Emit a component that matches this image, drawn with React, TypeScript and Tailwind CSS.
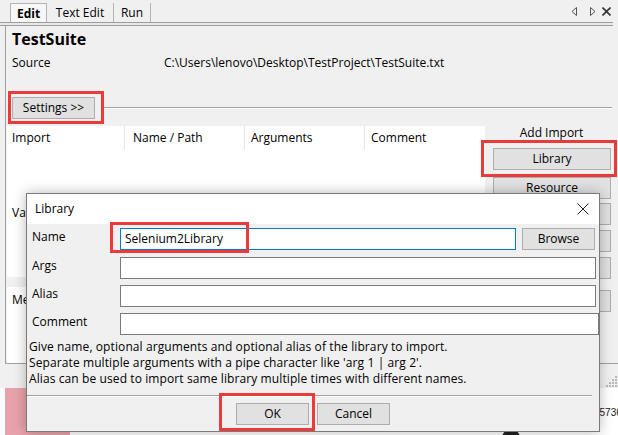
import React from 'react'

// Windows-style button used across the settings panel and the dialog
function WinButton({ label, className = '' }: { label: string; className?: string }) {
  return (
    <div
      className={`h-[22px] border border-[#adadad] bg-[#e1e1e1] text-center leading-[20px] text-black ${className}`}
    >
      {label}
    </div>
  )
}

function TriLeft() {
  return (
    <svg width="7" height="9" viewBox="0 0 7 9">
      <polygon points="5.5,0.5 1,4.5 5.5,8.5" fill="none" stroke="#555" strokeWidth="1" />
    </svg>
  )
}

function TriRight() {
  return (
    <svg width="7" height="9" viewBox="0 0 7 9">
      <polygon points="1.5,0.5 6,4.5 1.5,8.5" fill="none" stroke="#555" strokeWidth="1" />
    </svg>
  )
}

function CloseX({ size = 9, stroke = 1.6, color = '#333' }: { size?: number; stroke?: number; color?: string }) {
  return (
    <svg width={size} height={size} viewBox={`0 0 ${size} ${size}`}>
      <line x1="0.5" y1="0.5" x2={size - 0.5} y2={size - 0.5} stroke={color} strokeWidth={stroke} />
      <line x1={size - 0.5} y1="0.5" x2="0.5" y2={size - 0.5} stroke={color} strokeWidth={stroke} />
    </svg>
  )
}

function Grip() {
  const dots = [
    [9, 0],
    [6, 3],
    [9, 3],
    [3, 6],
    [6, 6],
    [9, 6],
    [0, 9],
    [3, 9],
    [6, 9],
    [9, 9],
  ]
  return (
    <svg width="11" height="11" viewBox="0 0 11 11">
      {dots.map(([x, y], i) => (
        <rect key={i} x={x} y={y} width="2" height="2" fill="#b8b8b8" />
      ))}
    </svg>
  )
}

function HeaderCell({ label, className = '' }: { label: string; className?: string }) {
  return <div className={`h-[24px] leading-[24px] ${className}`}>{label}</div>
}

export default function App() {
  return (
    <div className="relative w-[618px] h-[435px] overflow-hidden bg-white text-[12px] text-black font-['Open_Sans',sans-serif]">
      {/* Main RIDE window */}
      <div className="h-[388px] bg-[#f0f0f0] flex flex-col">
        {/* Tabs */}
        <div className="h-[22px] flex items-end">
          <div className="ml-[10px] w-[37px] h-[19px] border border-b-0 border-[#b4b4b4] bg-[#f7f7f7] text-center font-bold leading-[19px]">
            Edit
          </div>
          <div className="w-[67px] h-[19px] border-r border-[#b4b4b4] text-center leading-[19px]">Text Edit</div>
          <div className="w-[37px] h-[19px] border-r border-[#b4b4b4] text-center leading-[19px]">Run</div>
          <div className="ml-auto self-stretch flex items-center mr-[7px]">
            <TriLeft />
            <div className="ml-[11px]">
              <TriRight />
            </div>
            <div className="ml-[6px]">
              <CloseX />
            </div>
          </div>
        </div>
        <div className="h-[4px] mr-[5px] border-y border-[#9c9c9c] bg-[#e8e8e8]" />

        {/* Settings panel */}
        <div className="flex-1 ml-[5px] border-l border-b border-[#a0a0a0] flex flex-col">
          <div className="mt-[3px] h-[20px] pl-[6px] text-[16px] font-bold leading-[20px]">TestSuite</div>
          <div className="mt-[6px] h-[16px] pl-[6px] flex leading-[16px]">
            <span className="w-[152px]">Source</span>
            <span>C:\Users\lenovo\Desktop\TestProject\TestSuite.txt</span>
          </div>

          <div className="mt-[20px] h-[33px] flex items-center">
            <div className="ml-[2px] w-[96px] h-[33px] border-[3px] border-[#eb3a3a] flex items-center pl-[1px]">
              <WinButton label="Settings >>" className="w-[83px]" />
            </div>
            <div className="flex-1 mr-[6px] h-[2px] border-t border-[#a0a0a0] border-b border-b-white" />
          </div>

          <div className="mt-[2px] flex-1 flex">
            {/* Tables */}
            <div className="w-[479px] pl-[1px] flex flex-col">
              <div className="h-[74px] bg-white flex">
                <HeaderCell label="Import" className="w-[118px] pl-[5px] border-r border-[#e6e6e6]" />
                <HeaderCell label="Name / Path" className="w-[120px] pl-[8px] border-r border-[#e6e6e6]" />
                <HeaderCell label="Arguments" className="w-[120px] pl-[6px] border-r border-[#e6e6e6]" />
                <HeaderCell label="Comment" className="flex-1 pl-[6px]" />
              </div>
              <div className="h-[77px] bg-white pt-[1px] flex">
                <HeaderCell label="Variable" className="w-[118px] pl-[5px]" />
              </div>
              <div className="h-[10px]" />
              <div className="flex-1 bg-white pt-[1px] flex">
                <HeaderCell label="Metadata" className="w-[118px] pl-[5px]" />
              </div>
            </div>

            {/* Add buttons */}
            <div className="flex-1 flex flex-col">
              <div className="h-[14px] leading-[14px] text-center">Add Import</div>
              <div className="-ml-[4px] mr-[1px] h-[37px] border-[3px] border-[#eb3a3a] pl-[9px] pt-[5px]">
                <WinButton label="Library" className="w-[118px]" />
              </div>
              <WinButton label="Resource" className="ml-[8px] w-[118px]" />
              <WinButton label="Variables" className="ml-[8px] mt-[4px] w-[118px]" />
              <WinButton label="Add Scalar" className="ml-[8px] mt-[5px] w-[118px]" />
              <WinButton label="Add List" className="ml-[8px] mt-[5px] w-[118px]" />
              <WinButton label="Add Metadata" className="ml-[8px] mt-[11px] w-[118px]" />
            </div>
          </div>
        </div>

        {/* Status bar */}
        <div className="h-[24px] flex items-end justify-end pr-[1px] pb-[1px]">
          <Grip />
        </div>
      </div>

      {/* Desktop behind */}
      <div className="absolute left-[5px] top-[388px] w-[65px] h-[47px] bg-[#e8a2ab]" />
      <div className="absolute left-[594px] top-[405px] leading-[16px] text-[10px] text-[#222] font-['Liberation_Sans',sans-serif]">
        65736
      </div>
      <div className="absolute left-[502px] top-[429px] w-[18px] h-[18px] rounded-full bg-[#222]" />

      {/* Library dialog */}
      <div className="absolute left-[26px] top-[193px] w-[574px] h-[239px] border border-[#7a7a7a] bg-[#f0f0f0] shadow-[0_0_12px_rgba(0,0,0,0.28)] flex flex-col">
        <div className="h-[30px] bg-white flex items-center pl-[8px] pr-[10px]">
          <span>Library</span>
          <div className="ml-auto">
            <CloseX size={12} stroke={1} color="#222" />
          </div>
        </div>

        <div className="mt-[4px] flex items-start">
          <div className="w-[93px] pl-[5px] leading-[18px]">Name</div>
          <div className="w-[396px] h-[22px] border border-[#0078d7] bg-white pl-[4px] leading-[20px]">
            Selenium2Library
          </div>
          <WinButton label="Browse" className="ml-[6px] w-[73px]" />
        </div>
        <div className="mt-[7px] flex items-start">
          <div className="w-[93px] pl-[5px] leading-[18px]">Args</div>
          <div className="w-[476px] h-[22px] border border-[#7a7a7a] bg-white" />
        </div>
        <div className="mt-[6px] flex items-start">
          <div className="w-[93px] pl-[5px] leading-[18px]">Alias</div>
          <div className="w-[476px] h-[22px] border border-[#7a7a7a] bg-white" />
        </div>
        <div className="mt-[6px] flex items-start">
          <div className="w-[93px] pl-[5px] leading-[18px]">Comment</div>
          <div className="w-[479px] h-[22px] border border-[#7a7a7a] bg-white" />
        </div>

        <div className="mt-[4px] pl-[2px] leading-[16px] tracking-[0.1px]">
          <div>Give name, optional arguments and optional alias of the library to import.</div>
          <div>Separate multiple arguments with a pipe character like 'arg 1 | arg 2'.</div>
          <div>Alias can be used to import same library multiple times with different names.</div>
        </div>

        <div className="mt-[8px] mr-[7px] h-[2px] border-t border-[#a0a0a0] border-b border-b-white" />

        <div className="mt-[6px] pl-[209px] flex gap-[8px]">
          <WinButton label="OK" className="w-[73px]" />
          <WinButton label="Cancel" className="w-[73px]" />
        </div>

        {/* Annotation boxes */}
        <div className="absolute left-[83px] top-[28px] w-[139px] h-[31px] border-[3px] border-[#eb3a3a]" />
        <div className="absolute left-[192px] top-[199px] w-[96px] h-[38px] border-[3px] border-[#eb3a3a]" />
      </div>
    </div>
  )
}
